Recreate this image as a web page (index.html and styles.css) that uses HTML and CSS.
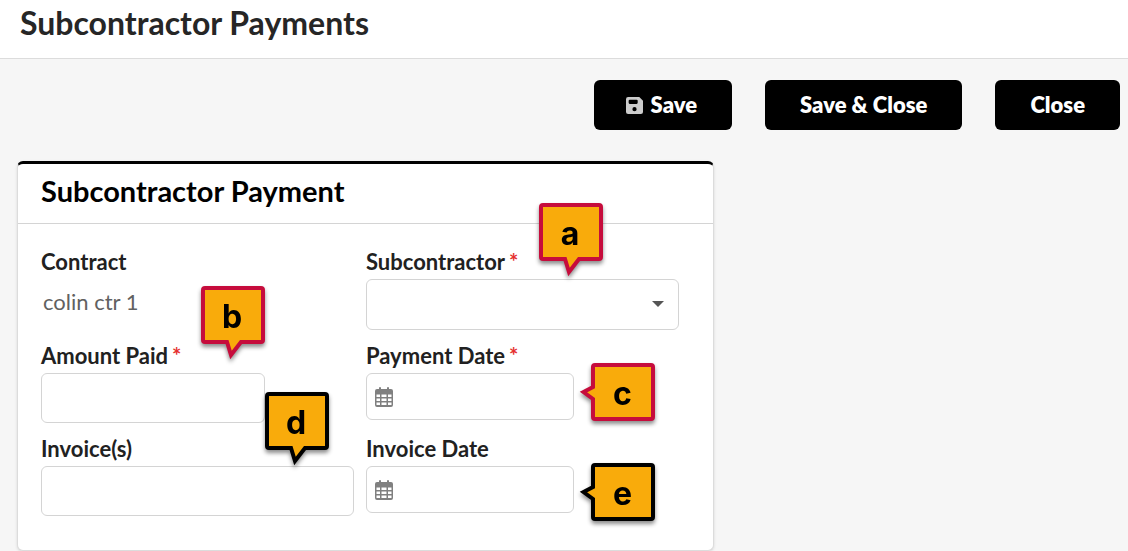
FILE: index.html
```
<!DOCTYPE html>
<html lang="en">
<head>
    <meta charset="UTF-8">
    <meta name="viewport" content="width=device-width, initial-scale=1.0">
    <title>Subcontractor Payments</title>
    <link rel="stylesheet" href="styles.css">
</head>
<body>
    <!-- shapes shared by the fields and callouts -->
    <svg class="sprite" aria-hidden="true">
        <symbol id="calendar" viewBox="0 0 18 20">
            <path fill-rule="evenodd" d="M4 1a1 1 0 0 1 2 0v1h6V1a1 1 0 0 1 2 0v1h2a2 2 0 0 1 2 2v14a2 2 0 0 1-2 2H2a2 2 0 0 1-2-2V4a2 2 0 0 1 2-2h2zM1.500 7.500v2.500h3.500V7.500zM6.500 7.500v2.500h5V7.500zM13 7.500v2.500h3.500V7.500zM1.500 11.500v2.500h3.500v-2.500zM6.500 11.500v2.500h5v-2.500zM13 11.500v2.500h3.500v-2.500zM1.500 15.500v2.500h3.500v-2.500zM6.500 15.500v2.500h5v-2.500zM13 15.500v2.500h3.500v-2.500z"/>
        </symbol>
        <symbol id="bubble-down" viewBox="0 0 64 76">
            <path d="M4 2H60Q62 2 62 4V54Q62 56 60 56H40L30 69L26 56H4Q2 56 2 54V4Q2 2 4 2Z"/>
        </symbol>
        <symbol id="bubble-left" viewBox="0 0 76 58">
            <path d="M16 2H72Q74 2 74 4V54Q74 56 72 56H16Q14 56 14 54V36L4.500 29L14 24V4Q14 2 16 2Z"/>
        </symbol>
    </svg>

    <header class="page-header">
        <h1>Subcontractor Payments</h1>
    </header>

    <main>
        <div class="toolbar">
            <button type="submit" form="payment-form" class="save">
                <svg class="save-icon" viewBox="0 0 16 16" aria-hidden="true">
                    <path fill-rule="evenodd" d="M2 0H12.500L16 3.500V14a2 2 0 0 1-2 2H2a2 2 0 0 1-2-2V2a2 2 0 0 1 2-2zM3.500 2.500a1 1 0 0 0-1 1v2a1 1 0 0 0 1 1H10a1 1 0 0 0 1-1V3.500a1 1 0 0 0-1-1zM8 9.500a2 2 0 1 0 0 4a2 2 0 0 0 0-4z"/>
                </svg>
                Save
            </button>
            <button type="button">Save &amp; Close</button>
            <button type="button">Close</button>
        </div>

        <section class="card">
            <h2>Subcontractor Payment</h2>
            <form id="payment-form">
                <div class="field">
                    <label for="contract">Contract</label>
                    <output id="contract">colin ctr 1</output>
                </div>

                <div class="field">
                    <label for="subcontractor">Subcontractor<span class="required">*</span></label>
                    <div class="select">
                        <select id="subcontractor">
                            <option></option>
                        </select>
                    </div>
                    <div class="callout down callout-a required-step">
                        <svg><use href="#bubble-down"/></svg>
                        <span>a</span>
                    </div>
                </div>

                <div class="field">
                    <label for="amount">Amount Paid<span class="required">*</span></label>
                    <input type="text" id="amount" class="amount">
                    <div class="callout down callout-b required-step">
                        <svg><use href="#bubble-down"/></svg>
                        <span>b</span>
                    </div>
                </div>

                <div class="field">
                    <label for="payment-date">Payment Date<span class="required">*</span></label>
                    <div class="date">
                        <svg aria-hidden="true"><use href="#calendar"/></svg>
                        <input type="text" id="payment-date">
                    </div>
                    <div class="callout left callout-c required-step">
                        <svg><use href="#bubble-left"/></svg>
                        <span>c</span>
                    </div>
                </div>

                <div class="field">
                    <label for="invoices">Invoice(s)</label>
                    <input type="text" id="invoices">
                    <div class="callout down callout-d">
                        <svg><use href="#bubble-down"/></svg>
                        <span>d</span>
                    </div>
                </div>

                <div class="field">
                    <label for="invoice-date">Invoice Date</label>
                    <div class="date">
                        <svg aria-hidden="true"><use href="#calendar"/></svg>
                        <input type="text" id="invoice-date">
                    </div>
                    <div class="callout left callout-e">
                        <svg><use href="#bubble-left"/></svg>
                        <span>e</span>
                    </div>
                </div>
            </form>
        </section>
    </main>
</body>
</html>
```
FILE: styles.css
```
* {
    box-sizing: border-box;
}

body {
    font-family: Lato, sans-serif;
    font-size: 22px;
    line-height: 24px;
    margin: 0;
    color: #212121;
    background-color: #f6f6f6;
}

.sprite {
    position: absolute;
    width: 0;
    height: 0;
}

.page-header {
    background-color: white;
    border-bottom: 1px solid #dcdcdc;
    padding: 3px 20px 15px;
}

h1 {
    font-size: 32px;
    line-height: 40px;
    font-weight: 700;
    margin: 0;
    color: #262626;
}

.toolbar {
    display: flex;
    flex-wrap: wrap;
    justify-content: flex-end;
    gap: 33px;
    padding: 21px 8px 31px;
}

button {
    display: flex;
    align-items: center;
    gap: 8px;
    height: 50px;
    padding: 0 35px;
    font: inherit;
    font-weight: 800;
    color: white;
    background-color: black;
    border: none;
    border-radius: 6px;
    cursor: pointer;
}

.save {
    padding-left: 32px;
}

.save-icon {
    width: 17px;
    height: 17px;
    fill: #cccccc;
}

.card {
    max-width: 697px;
    margin-left: 17px;
    background-color: white;
    border: 1px solid #dcdcdc;
    border-top: 3px solid black;
    border-radius: 6px;
    box-shadow: 0 1px 3px rgba(0,0,0,0.12);
}

h2 {
    font-size: 29px;
    line-height: 36px;
    font-weight: 700;
    margin: 0;
    padding: 9px 23px 14px;
    color: black;
    border-bottom: 1px solid #d4d4d4;
}

form {
    display: grid;
    grid-template-columns: 1fr 1fr;
    gap: 14px 12px;
    padding: 26px 34px 34px 23px;
}

.field {
    position: relative;
}

label {
    display: block;
    margin-bottom: 5px;
    font-weight: 700;
}

.required {
    margin-left: 4px;
    color: #e53030;
}

output {
    display: block;
    padding: 11px 2px;
    color: #616161;
}

input,
select {
    display: block;
    width: 100%;
    height: 50px;
    padding: 0 12px;
    font: inherit;
    color: inherit;
    background-color: white;
    border: 1px solid #d4d4d4;
    border-radius: 6px;
}

.amount {
    width: 224px;
}

.select {
    position: relative;
}

select {
    height: 51px;
    appearance: none;
}

.select::after {
    content: "";
    position: absolute;
    top: 22px;
    right: 15px;
    border: 6px solid transparent;
    border-top-color: #555555;
    border-bottom: none;
    pointer-events: none;
}

.date {
    position: relative;
    width: 208px;
}

.date input {
    height: 47px;
    padding-left: 36px;
}

.date svg {
    position: absolute;
    top: 14px;
    left: 9px;
    width: 18px;
    height: 20px;
    fill: #808080;
}

/* help callouts over the form */
.callout {
    position: absolute;
    z-index: 1;
    color: black;
    font-family: Inter, sans-serif;
    font-size: 32px;
    font-weight: 700;
    line-height: 62px;
    text-align: center;
    pointer-events: none;
    filter: drop-shadow(0 3px 2px rgba(0,0,0,0.45));
}

.callout svg {
    position: absolute;
    top: 0;
    left: 0;
    width: 100%;
    height: 100%;
    fill: #f9ab0b;
    stroke: black;
    stroke-width: 4;
}

.callout span {
    position: relative;
}

.required-step svg {
    stroke: #c60c3c;
}

.down {
    width: 64px;
    height: 76px;
    padding-right: 2px;
}

.left {
    width: 76px;
    height: 58px;
    padding-left: 11px;
}

.callout-a {
    top: -47px;
    left: 173px;
}

.callout-b {
    top: -58px;
    left: 160px;
}

.callout-c {
    top: 19px;
    left: 213px;
}

.callout-d {
    top: -45px;
    left: 224px;
}

.callout-e {
    top: 26px;
    left: 213px;
}
```
